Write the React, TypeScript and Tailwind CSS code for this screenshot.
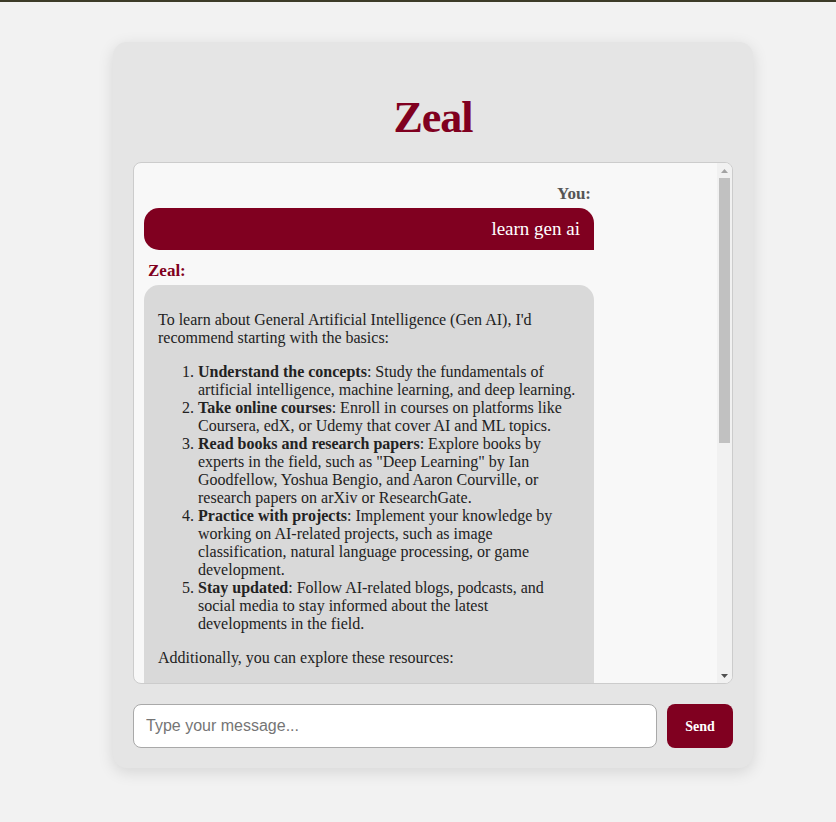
import React from "react";

const serif = { fontFamily: '"Liberation Serif", "Times New Roman", serif' };

export default function App() {
  return (
    <div className="min-h-[822px] w-full bg-[#f2f2f2]" style={serif}>
      <div className="h-[2px] w-full bg-[#3d3b28]" />
      <div className="pt-[40px] pl-[113px]">
        <div className="w-[640px] rounded-[14px] bg-[#e5e5e5] p-[20px] shadow-[0_4px_16px_rgba(0,0,0,0.12)]">
          <h1 className="pt-[32px] pb-[20px] text-center text-[44px] font-bold leading-[48px] tracking-[-1px] text-[#800020]">
            Zeal
          </h1>
          <div className="flex h-[522px] w-[600px] overflow-hidden rounded-[8px] border border-[#cccccc] bg-[#f8f8f8]">
            <div className="flex-1 overflow-hidden px-[10px] py-[10px]">
              <div className="my-[9px] w-[450px] text-right">
                <div className="pr-[3px] text-[17px] font-bold leading-[24px] text-[#555555]">You:</div>
                <div className="mt-[2px] rounded-[15px] rounded-br-none bg-[#800020] px-[14px] py-[10px] text-[19px] leading-[22px] text-white">
                  learn gen ai
                </div>
              </div>
              <div className="my-[9px] w-[450px]">
                <div className="pl-[4px] text-[17px] font-bold leading-[24px] text-[#800020]">Zeal:</div>
                <div className="mt-[2px] rounded-[15px] rounded-bl-none bg-[#d9d9d9] px-[14px] pt-[10px] pb-[40px] text-[16px] leading-[18px] text-[#222222]">
                  <p className="my-4">
                    To learn about General Artificial Intelligence (Gen AI), I'd recommend starting with the basics:
                  </p>
                  <ol className="my-4 list-decimal pl-10">
                    <li>
                      <b>Understand the concepts</b>: Study the fundamentals of artificial intelligence, machine learning, and deep learning.
                    </li>
                    <li>
                      <b>Take online courses</b>: Enroll in courses on platforms like Coursera, edX, or Udemy that cover AI and ML topics.
                    </li>
                    <li>
                      <b>Read books and research papers</b>: Explore books by experts in the field, such as "Deep Learning" by Ian Goodfellow, Yoshua Bengio, and Aaron Courville, or research papers on arXiv or ResearchGate.
                    </li>
                    <li>
                      <b>Practice with projects</b>: Implement your knowledge by working on AI-related projects, such as image classification, natural language processing, or game development.
                    </li>
                    <li>
                      <b>Stay updated</b>: Follow AI-related blogs, podcasts, and social media to stay informed about the latest developments in the field.
                    </li>
                  </ol>
                  <p className="mt-4">Additionally, you can explore these resources:</p>
                </div>
              </div>
            </div>
            <div className="flex w-[15px] shrink-0 flex-col items-center bg-[#f1f1f1]">
              <div className="flex h-[15px] w-full items-center justify-center">
                <svg width="7" height="4" viewBox="0 0 7 4">
                  <path d="M3.5 0 L7 4 L0 4 Z" fill="#a3a3a3" />
                </svg>
              </div>
              <div className="h-[265px] w-[11px] bg-[#c1c1c1]" />
              <div className="flex-1" />
              <div className="flex h-[15px] w-full items-center justify-center">
                <svg width="7" height="4" viewBox="0 0 7 4">
                  <path d="M0 0 L7 0 L3.5 4 Z" fill="#505050" />
                </svg>
              </div>
            </div>
          </div>
          <div className="mt-[20px] flex gap-[10px]">
            <input
              type="text"
              placeholder="Type your message..."
              className="h-[44px] flex-1 rounded-[8px] border border-[#a9a9a9] bg-white px-[12px] text-[16px] text-[#222] outline-none placeholder:text-[#757575]"
              style={{ fontFamily: '"Liberation Sans", Arial, sans-serif' }}
            />
            <button className="h-[44px] w-[66px] rounded-[8px] bg-[#800020] text-[14px] font-bold text-white" style={serif}>
              Send
            </button>
          </div>
        </div>
      </div>
    </div>
  );
}
